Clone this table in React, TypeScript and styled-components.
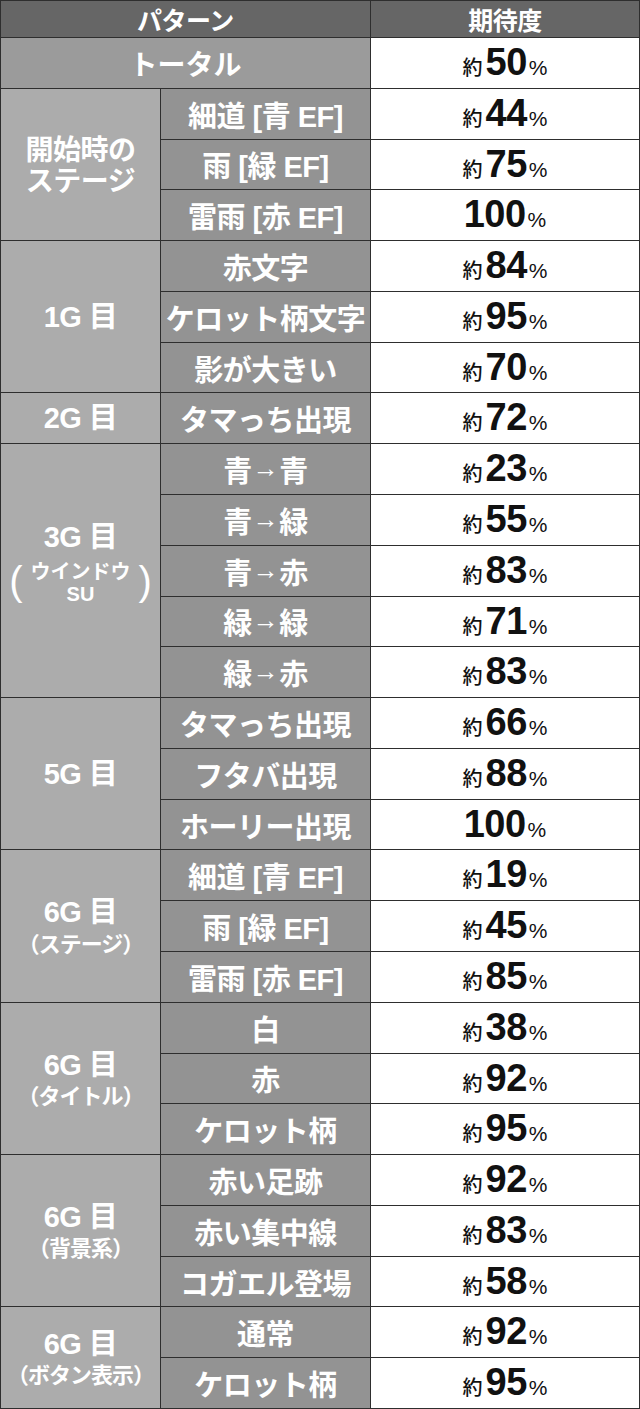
import React from 'react';
import styled, { createGlobalStyle } from 'styled-components';

type Row = { name: string; value: string; approx?: boolean };
type Group = { main: string; sub?: string; window?: boolean; lines?: string[]; rows: Row[] };

const groups: Group[] = [
  {
    main: '',
    lines: ['開始時の', 'ステージ'],
    rows: [
      { name: '細道 [青 EF]', value: '44' },
      { name: '雨 [緑 EF]', value: '75' },
      { name: '雷雨 [赤 EF]', value: '100', approx: false },
    ],
  },
  {
    main: '1G 目',
    rows: [
      { name: '赤文字', value: '84' },
      { name: 'ケロット柄文字', value: '95' },
      { name: '影が大きい', value: '70' },
    ],
  },
  { main: '2G 目', rows: [{ name: 'タマっち出現', value: '72' }] },
  {
    main: '3G 目',
    window: true,
    rows: [
      { name: '青→青', value: '23' },
      { name: '青→緑', value: '55' },
      { name: '青→赤', value: '83' },
      { name: '緑→緑', value: '71' },
      { name: '緑→赤', value: '83' },
    ],
  },
  {
    main: '5G 目',
    rows: [
      { name: 'タマっち出現', value: '66' },
      { name: 'フタバ出現', value: '88' },
      { name: 'ホーリー出現', value: '100', approx: false },
    ],
  },
  {
    main: '6G 目',
    sub: '（ステージ）',
    rows: [
      { name: '細道 [青 EF]', value: '19' },
      { name: '雨 [緑 EF]', value: '45' },
      { name: '雷雨 [赤 EF]', value: '85' },
    ],
  },
  {
    main: '6G 目',
    sub: '（タイトル）',
    rows: [
      { name: '白', value: '38' },
      { name: '赤', value: '92' },
      { name: 'ケロット柄', value: '95' },
    ],
  },
  {
    main: '6G 目',
    sub: '（背景系）',
    rows: [
      { name: '赤い足跡', value: '92' },
      { name: '赤い集中線', value: '83' },
      { name: 'コガエル登場', value: '58' },
    ],
  },
  {
    main: '6G 目',
    sub: '（ボタン表示）',
    rows: [
      { name: '通常', value: '92' },
      { name: 'ケロット柄', value: '95' },
    ],
  },
];

const GlobalStyle = createGlobalStyle`
  html, body {
    margin: 0;
    padding: 0;
    background: #ffffff;
  }
  body {
    font-family: "Noto Sans CJK JP", "Noto Sans", sans-serif;
  }
`;

const Table = styled.div`
  display: grid;
  grid-template-columns: 159px 209px 1fr;
  grid-template-rows: 36px repeat(27, 1fr);
  gap: 1px;
  padding: 1px;
  width: 640px;
  height: 1409px;
  box-sizing: border-box;
  background: #2e2e2e;
`;

const Cell = styled.div<{ $row: number; $span?: number }>`
  grid-row: ${(p) => p.$row} / span ${(p) => p.$span ?? 1};
  display: flex;
  align-items: center;
  justify-content: center;
  min-width: 0;
  min-height: 0;
`;

const HeaderCell = styled(Cell)<{ $wide?: boolean }>`
  grid-column: ${(p) => (p.$wide ? '1 / span 2' : '3')};
  background: #666666;
  color: #ffffff;
  font-size: 25px;
  font-weight: 700;
  letter-spacing: -0.5px;
`;

const TotalCell = styled(Cell)`
  grid-column: 1 / span 2;
  background: #9b9b9b;
  color: #ffffff;
  font-size: 28px;
  font-weight: 700;
`;

const GroupCell = styled(Cell)<{ $lift?: boolean }>`
  grid-column: 1;
  flex-direction: column;
  padding-bottom: ${(p) => (p.$lift ? '14px' : '0')};
  box-sizing: border-box;
  background: #acacac;
  color: #ffffff;
  font-family: "Liberation Sans", "Noto Sans CJK JP", sans-serif;
  font-weight: 700;
  text-align: center;
`;

const GroupMain = styled.div`
  font-size: 29px;
  line-height: 1.05;
  letter-spacing: -0.5px;
`;

const GroupLine = styled.div`
  font-family: "Noto Sans CJK JP", sans-serif;
  font-size: 28px;
  line-height: 1.12;
  letter-spacing: -0.5px;
`;

const GroupSub = styled.div`
  font-family: "Noto Sans CJK JP", sans-serif;
  font-size: 22px;
  line-height: 1.2;
  margin-top: 1px;
  letter-spacing: -1px;
`;

const WindowNote = styled.div`
  display: flex;
  align-items: center;
  gap: 8px;
  margin-top: 8px;
`;

const Paren = styled.span`
  font-weight: 400;
  font-size: 40px;
  line-height: 1;
  margin-top: -4px;
`;

const WindowText = styled.div`
  display: flex;
  flex-direction: column;
  align-items: center;
  font-size: 20px;
  line-height: 1.1;
`;

const SubCell = styled(Cell)`
  grid-column: 2;
  background: #939393;
  color: #ffffff;
  font-family: "Liberation Sans", "Noto Sans CJK JP", sans-serif;
  font-size: 29px;
  font-weight: 700;
  letter-spacing: -0.5px;
  white-space: nowrap;
`;

const Arrow = styled.span`
  font-family: "Liberation Sans", Arial, sans-serif;
  font-size: 26px;
  font-weight: 700;
  vertical-align: 5px;
  margin: 0 1px;
`;

const ValueCell = styled(Cell)`
  grid-column: 3;
  background: #ffffff;
  color: #111111;
  align-items: baseline;
  padding-top: 5px;
  box-sizing: border-box;
`;

const Approx = styled.span`
  font-size: 20px;
  font-weight: 500;
  margin-right: 3px;
`;

const Num = styled.span`
  font-family: "Liberation Sans", Arial, sans-serif;
  font-size: 38px;
  font-weight: 700;
  letter-spacing: -0.5px;
  line-height: 1;
`;

const Pct = styled.span`
  font-family: "Liberation Sans", Arial, sans-serif;
  font-size: 21px;
  font-weight: 400;
  margin-left: 2px;
`;

const Value = ({ row, value, approx = true }: { row: number; value: string; approx?: boolean }) => (
  <ValueCell $row={row}>
    {approx && <Approx>約</Approx>}
    <Num>{value}</Num>
    <Pct>%</Pct>
  </ValueCell>
);

const Name = ({ text }: { text: string }) => {
  const parts = text.split('→');
  if (parts.length === 1) return <>{text}</>;
  return (
    <span>
      {parts[0]}
      <Arrow>→</Arrow>
      {parts[1]}
    </span>
  );
};

const GroupLabel = ({ g }: { g: Group }) => {
  if (g.lines) return <>{g.lines.map((l) => <GroupLine key={l}>{l}</GroupLine>)}</>;
  return (
    <>
      <GroupMain>{g.main}</GroupMain>
      {g.sub && <GroupSub>{g.sub}</GroupSub>}
      {g.window && (
        <WindowNote>
          <Paren>(</Paren>
          <WindowText>
            <span>ウインドウ</span>
            <span>SU</span>
          </WindowText>
          <Paren>)</Paren>
        </WindowNote>
      )}
    </>
  );
};

export default function App() {
  let row = 3;
  const body: React.ReactNode[] = [];
  groups.forEach((g, gi) => {
    const start = row;
    body.push(
      <GroupCell key={`g${gi}`} $row={start} $span={g.rows.length} $lift={g.window}>
        <GroupLabel g={g} />
      </GroupCell>
    );
    g.rows.forEach((r, ri) => {
      const at = start + ri;
      body.push(
        <SubCell key={`s${gi}-${ri}`} $row={at}>
          <Name text={r.name} />
        </SubCell>
      );
      body.push(<Value key={`v${gi}-${ri}`} row={at} value={r.value} approx={r.approx} />);
    });
    row += g.rows.length;
  });

  return (
    <>
      <GlobalStyle />
      <Table>
        <HeaderCell $row={1} $wide>パターン</HeaderCell>
        <HeaderCell $row={1}>期待度</HeaderCell>
        <TotalCell $row={2}>トータル</TotalCell>
        <Value row={2} value="50" />
        {body}
      </Table>
    </>
  );
}
